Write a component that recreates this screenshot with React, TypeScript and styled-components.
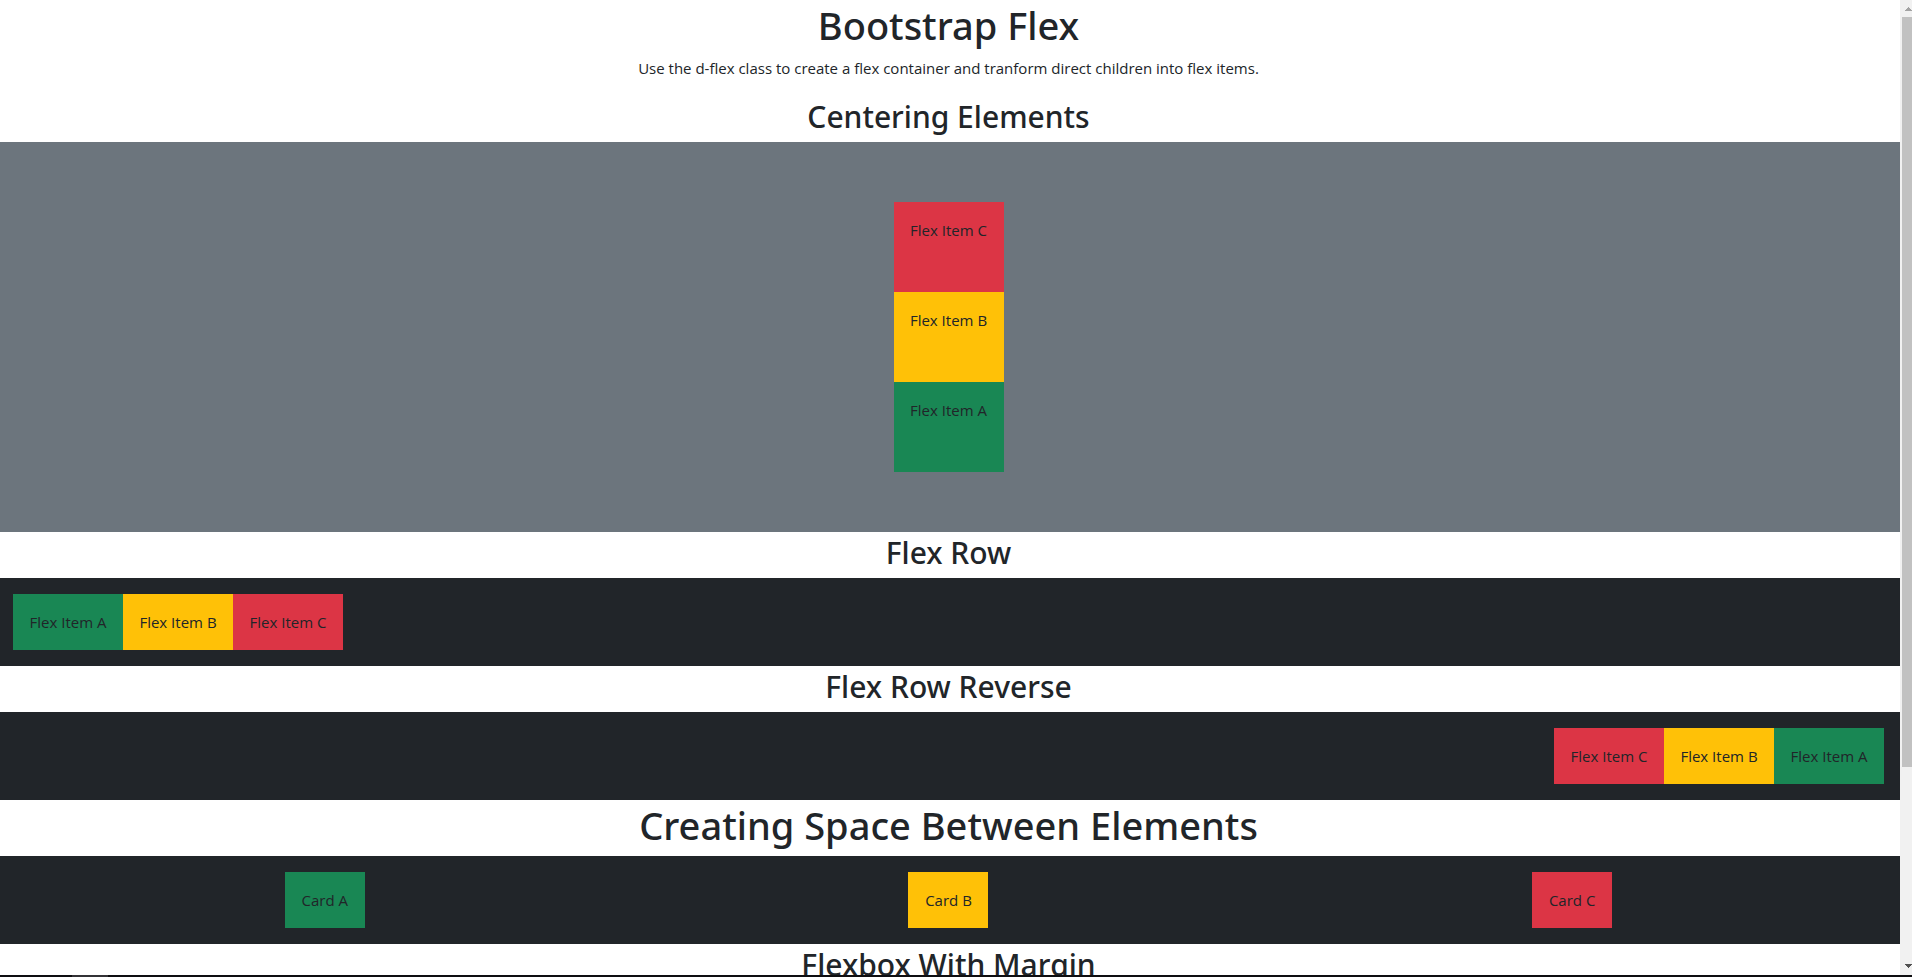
import React from "react";
import styled, { createGlobalStyle } from "styled-components";

const GlobalStyle = createGlobalStyle`
  *, *::before, *::after { box-sizing: border-box; }
  body {
    margin: 0;
    background: #fff;
    color: #212529;
    font-family: "Open Sans", "Noto Sans", sans-serif;
    font-size: 15px;
    line-height: 24px;
  }
`;

type Tone = "success" | "warning" | "danger";

const tones: Record<Tone, string> = {
  success: "#198754",
  warning: "#ffc107",
  danger: "#dc3545",
};

const Window = styled.div`
  display: grid;
  grid-template: minmax(0, 1fr) 2px / minmax(0, 1fr) 12px;
  height: 100vh;
`;

const Page = styled.main`
  overflow: hidden;
  text-align: center;
`;

const Title = styled.h1`
  margin: 0 3px 6px 0;
  font-family: "Noto Sans", sans-serif;
  font-size: 38px;
  font-weight: 500;
  line-height: 50px;
`;

const Subtitle = styled.h2`
  margin: 0 3px 4px 0;
  font-family: "Noto Sans", sans-serif;
  font-size: 30px;
  font-weight: 500;
  line-height: 42px;
`;

const Lead = styled.p`
  margin: 0 3px 16px 0;
`;

const Band = styled.div<{ $justify?: string; $direction?: string }>`
  display: flex;
  flex-direction: ${({ $direction = "row" }) => $direction};
  justify-content: ${({ $justify = "flex-start" }) => $justify};
  padding: 16px 16px 16px 13px;
  background: #212529;
`;

const CenteredBand = styled(Band)`
  align-items: center;
  min-height: 390px;
  background: #6c757d;
`;

const Item = styled.div<{ $tone: Tone }>`
  min-width: 110px;
  padding: 16px;
  background: ${({ $tone }) => tones[$tone]};
`;

const TallItem = styled(Item)`
  height: 90px;
`;

const Card = styled(Item)`
  min-width: 80px;
`;

const ScrollTrack = styled.div`
  display: flex;
  flex-direction: column;
  align-items: flex-end;
  padding: 7px 0;
  background: #f1f1f1;
`;

const ScrollSpace = styled.div`
  display: flex;
  flex: 1;
  flex-direction: column;
  align-self: stretch;
  padding: 6px 0 10px 2px;
`;

const ScrollThumb = styled.div`
  height: 80%;
  background: #c1c1c1;
`;

const Arrow = styled.svg`
  display: block;
  width: 7px;
  height: 4px;
`;

const BottomEdge = styled.div`
  display: flex;
  grid-column: 1 / -1;
  padding-left: 72px;
  background: #0e0e11;
`;

const EdgeHighlight = styled.span`
  width: 36px;
  background: #333236;
`;

const items: { tone: Tone; letter: string }[] = [
  { tone: "success", letter: "A" },
  { tone: "warning", letter: "B" },
  { tone: "danger", letter: "C" },
];

export default function App() {
  return (
    <>
      <GlobalStyle />
      <Window>
        <Page>
          <Title>Bootstrap Flex</Title>
          <Lead>
            Use the d-flex class to create a flex container and tranform direct
            children into flex items.
          </Lead>

          <Subtitle>Centering Elements</Subtitle>
          <CenteredBand $direction="column-reverse" $justify="center">
            {items.map(({ tone, letter }) => (
              <TallItem key={letter} $tone={tone}>Flex Item {letter}</TallItem>
            ))}
          </CenteredBand>

          <Subtitle>Flex Row</Subtitle>
          <Band>
            {items.map(({ tone, letter }) => (
              <Item key={letter} $tone={tone}>Flex Item {letter}</Item>
            ))}
          </Band>

          <Subtitle>Flex Row Reverse</Subtitle>
          <Band $direction="row-reverse">
            {items.map(({ tone, letter }) => (
              <Item key={letter} $tone={tone}>Flex Item {letter}</Item>
            ))}
          </Band>

          <Title>Creating Space Between Elements</Title>
          <Band $justify="space-around">
            {items.map(({ tone, letter }) => (
              <Card key={letter} $tone={tone}>Card {letter}</Card>
            ))}
          </Band>

          <Subtitle>Flexbox With Margin</Subtitle>
        </Page>
        <ScrollTrack aria-hidden="true">
          <Arrow viewBox="0 0 7 4" shapeRendering="crispEdges">
            <path d="M3 0h1v1h1v1h1v1h1v1H0V3h1V2h1V1h1z" fill="#a3a3a3" />
          </Arrow>
          <ScrollSpace>
            <ScrollThumb />
          </ScrollSpace>
          <Arrow viewBox="0 0 7 4" shapeRendering="crispEdges">
            <path d="M0 0h7v1H6v1H5v1H4v1H3V3H2V2H1V1H0z" fill="#505050" />
          </Arrow>
        </ScrollTrack>
        <BottomEdge>
          <EdgeHighlight />
        </BottomEdge>
      </Window>
    </>
  );
}
